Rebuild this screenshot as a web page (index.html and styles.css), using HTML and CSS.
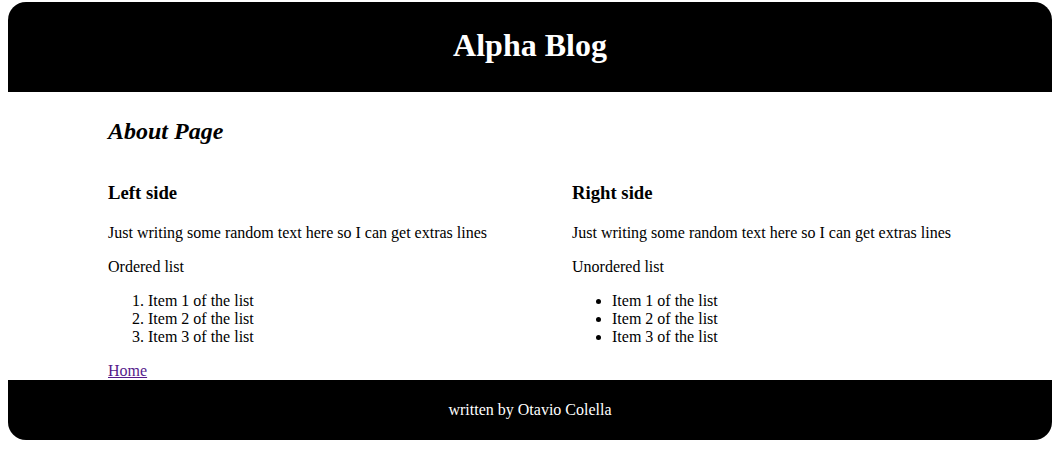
FILE: index.html
```html
<!DOCTYPE html>
<html>
<head>
<meta charset="utf-8">
<title>Alpha Blog</title>
<link rel="stylesheet" href="styles.css">
</head>
<body>
<header class="site-header">
  <h1 class="site-title">Alpha Blog</h1>
</header>
<main class="content">
  <h2 class="page-title">About Page</h2>
  <div class="columns">
    <section class="col">
      <h3 class="col-title">Left side</h3>
      <p>Just writing some random text here so I can get extras lines</p>
      <p>Ordered list</p>
      <ol class="list">
        <li>Item 1 of the list</li>
        <li>Item 2 of the list</li>
        <li>Item 3 of the list</li>
      </ol>
    </section>
    <section class="col">
      <h3 class="col-title">Right side</h3>
      <p>Just writing some random text here so I can get extras lines</p>
      <p>Unordered list</p>
      <ul class="list">
        <li>Item 1 of the list</li>
        <li>Item 2 of the list</li>
        <li>Item 3 of the list</li>
      </ul>
    </section>
  </div>
  <a class="home-link" href="#">Home</a>
</main>
<footer class="site-footer">written by Otavio Colella</footer>
</body>
</html>
```

FILE: styles.css
```css
html, body {
  font-family: "Liberation Serif", "Times New Roman", serif;
  font-size: 16px;
  color: #000;
  background: #fff;
}
body {
  margin: 2px 10px 0 8px;
}
.site-header {
  background: #000;
  color: #fff;
  border-radius: 18px 18px 0 0;
  height: 90px;
  display: flex;
  align-items: center;
  justify-content: center;
}
.site-title {
  margin: 0;
  font-size: 32px;
  font-weight: bold;
  padding-top: 0;
  position: relative;
  top: -2px;
}
.content {
  padding: 6px 100px 0;
}
.page-title {
  font-size: 24px;
  font-style: italic;
  font-weight: bold;
  margin: 19.92px 0;
}
.columns {
  display: grid;
  grid-template-columns: 464px 464px;
}
.col-title {
  font-size: 18.72px;
  margin: 16.72px 0 20.72px;
}
.col p {
  margin: 16px 0;
}
.list {
  margin: 16px 0;
  padding-left: 40px;
  line-height: 18px;
}
.home-link {
  display: inline-block;
  color: #551a8b;
  text-decoration: underline;
  line-height: 18px;
}
.site-footer {
  background: #000;
  color: #fff;
  border-radius: 0 0 18px 18px;
  height: 60px;
  margin-top: 0;
  display: flex;
  align-items: center;
  justify-content: center;
}
```
